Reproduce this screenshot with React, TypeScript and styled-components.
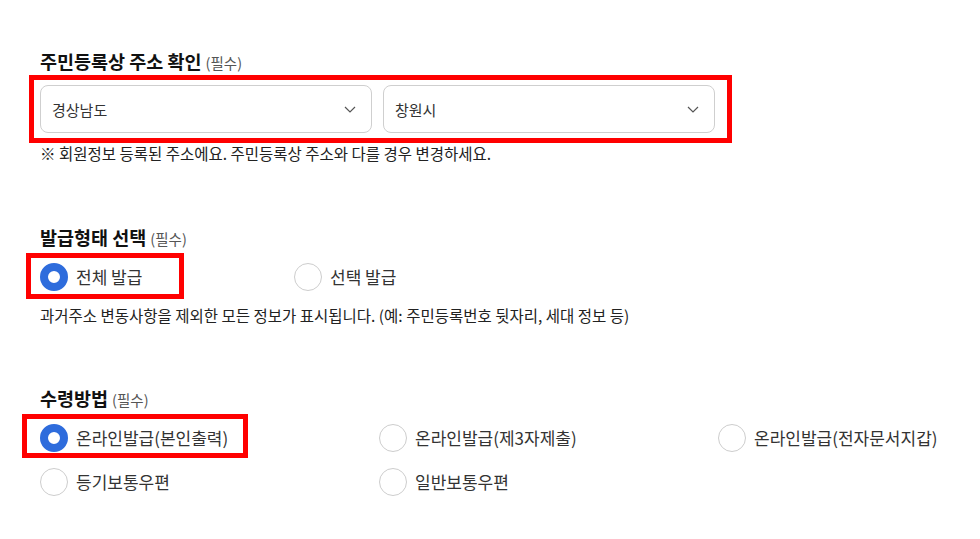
import React, { ReactElement } from 'react'
import styled, { createGlobalStyle } from 'styled-components'

const GlobalStyle = createGlobalStyle`
  body {
    margin: 0;
    background: #fff;
    font-family: "Noto Sans CJK KR", "Noto Sans", sans-serif;
    color: #222;
  }
`

const Page = styled.div`
  padding: 49px 0 0 40px;
`

const Section = styled.section<{ $gap: number }>`
  margin-top: ${p => p.$gap}px;
  &:first-child {
    margin-top: 0;
  }
`

const Title = styled.h2`
  display: flex;
  align-items: baseline;
  margin: 0;
  height: 24px;
  font-size: 18.5px;
  line-height: 24px;
  font-weight: 700;
  color: #111;
`

const Required = styled.span`
  margin-left: 4px;
  font-size: 14.5px;
  line-height: 1;
  font-weight: 400;
  color: #555;
`

const Highlight = styled.div<{ $inset: string }>`
  position: relative;
  &::after {
    content: '';
    position: absolute;
    inset: ${p => p.$inset};
    border: 5px solid #ff0000;
    pointer-events: none;
  }
`

const SelectRow = styled(Highlight)`
  display: grid;
  grid-template-columns: 332px 332px;
  gap: 11px;
  width: 675px;
  margin-top: 12px;
`

const SelectBox = styled.div`
  display: flex;
  align-items: center;
  justify-content: space-between;
  height: 48px;
  box-sizing: border-box;
  padding: 0 15px 0 11px;
  border: 1px solid #cfcfcf;
  border-radius: 8px;
  font-size: 15px;
  color: #333;
`

const Note = styled.p<{ $top: number }>`
  margin: ${p => p.$top}px 0 0;
  font-size: 15.5px;
  line-height: 20px;
  color: #222;
`

const OptionGrid = styled.div<{ $columns: string }>`
  display: grid;
  grid-template-columns: ${p => p.$columns};
  grid-auto-rows: 28px;
  row-gap: 16px;
  margin-top: 14px;
`

const Option = styled.label`
  display: flex;
  align-items: center;
  gap: 8px;
  height: 28px;
  font-size: 17px;
  line-height: 28px;
  color: #333;
  white-space: nowrap;
`

const OptionHighlight = styled(Highlight)`
  justify-self: start;
  height: 28px;
`

const Radio = styled.span<{ $checked?: boolean }>`
  flex: none;
  width: 28px;
  height: 28px;
  box-sizing: border-box;
  border-radius: 50%;
  background: #fff;
  border: ${p => (p.$checked ? '8px solid #2e6cdc' : '1px solid #cdcdcd')};
`

const Chevron = (): ReactElement => (
  <svg width='12' height='7' viewBox='0 0 12 7' fill='none'>
    <polyline points='1,1 6,6 11,1' stroke='#555' strokeWidth='1.2' />
  </svg>
)

const RadioOption = ({ label, checked }: { label: string; checked?: boolean }): ReactElement => (
  <Option>
    <Radio $checked={checked} />
    {label}
  </Option>
)

export default function App(): ReactElement {
  return (
    <>
      <GlobalStyle />
      <Page>
        <Section $gap={0}>
          <Title>
            주민등록상 주소 확인<Required>(필수)</Required>
          </Title>
          <SelectRow $inset='-10px -17px -10px -11px'>
            <SelectBox>
              경상남도
              <Chevron />
            </SelectBox>
            <SelectBox>
              창원시
              <Chevron />
            </SelectBox>
          </SelectRow>
          <Note $top={10}>※ 회원정보 등록된 주소에요. 주민등록상 주소와 다를 경우 변경하세요.</Note>
        </Section>

        <Section $gap={62}>
          <Title>
            발급형태 선택<Required>(필수)</Required>
          </Title>
          <OptionGrid $columns='254px auto'>
            <OptionHighlight $inset='-10px -42px -8px -14px'>
              <RadioOption label='전체 발급' checked />
            </OptionHighlight>
            <RadioOption label='선택 발급' />
          </OptionGrid>
          <Note $top={14}>과거주소 변동사항을 제외한 모든 정보가 표시됩니다. (예: 주민등록번호 뒷자리, 세대 정보 등)</Note>
        </Section>

        <Section $gap={61}>
          <Title>
            수령방법<Required>(필수)</Required>
          </Title>
          <OptionGrid $columns='339px 339px 1fr'>
            <OptionHighlight $inset='-10px -20px -6px -18px'>
              <RadioOption label='온라인발급(본인출력)' checked />
            </OptionHighlight>
            <RadioOption label='온라인발급(제3자제출)' />
            <RadioOption label='온라인발급(전자문서지갑)' />
            <RadioOption label='등기보통우편' />
            <RadioOption label='일반보통우편' />
          </OptionGrid>
        </Section>
      </Page>
    </>
  )
}
